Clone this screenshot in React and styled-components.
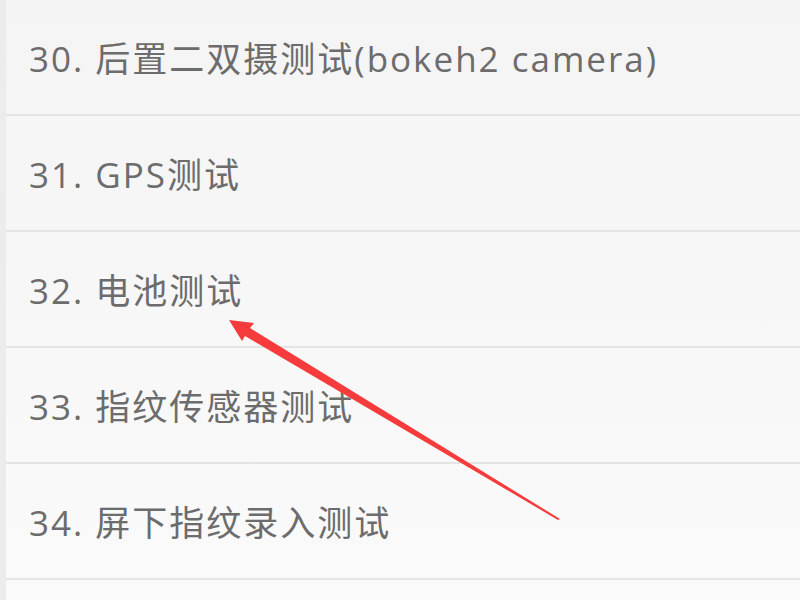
import styled, { createGlobalStyle } from "styled-components";

const GlobalStyle = createGlobalStyle`
  html, body {
    margin: 0;
    padding: 0;
    width: 800px;
    height: 600px;
    overflow: hidden;
  }
  body {
    font-family: "Open Sans", "Noto Sans CJK SC", sans-serif;
  }
`;

const Screen = styled.div`
  position: relative;
  width: 800px;
  height: 600px;
  display: flex;
  background: #ededed;
  overflow: hidden;
`;

const Gutter = styled.div`
  width: 6px;
  flex-shrink: 0;
  background: #ececec;
`;

const List = styled.ul`
  flex: 1;
  margin: 0;
  padding: 0;
  list-style: none;
  background: linear-gradient(#f4f4f4, #fafafa);
`;

const Row = styled.li`
  height: 114px;
  display: flex;
  align-items: center;
  padding-left: 23px;
  border-bottom: 2px solid #e4e4e4;
  font-size: 35px;
  color: #6c6c6c;
  letter-spacing: 2px;
  padding-bottom: 2px;
  box-sizing: border-box;
  height: 116px;
`;

const Overlay = styled.svg`
  position: absolute;
  left: 0;
  top: 0;
  pointer-events: none;
`;

const items = [
  "30. 后置二双摄测试(bokeh2 camera)",
  "31. GPS测试",
  "32. 电池测试",
  "33. 指纹传感器测试",
  "34. 屏下指纹录入测试",
  "",
];

const App = () => {
  return (
    <>
      <GlobalStyle />
      <Screen>
        <Gutter />
        <List>
          {items.map((text, i) => (
            <Row key={i}>{text}</Row>
          ))}
        </List>
        {/* red annotation arrow */}
        <Overlay width="800" height="600" viewBox="0 0 800 600">
          <polygon
            points="229,320 254,323 250,328 560,519 558,520 245,336 242,341"
            fill="#f53b3b"
          />
        </Overlay>
      </Screen>
    </>
  );
};

export default App;
